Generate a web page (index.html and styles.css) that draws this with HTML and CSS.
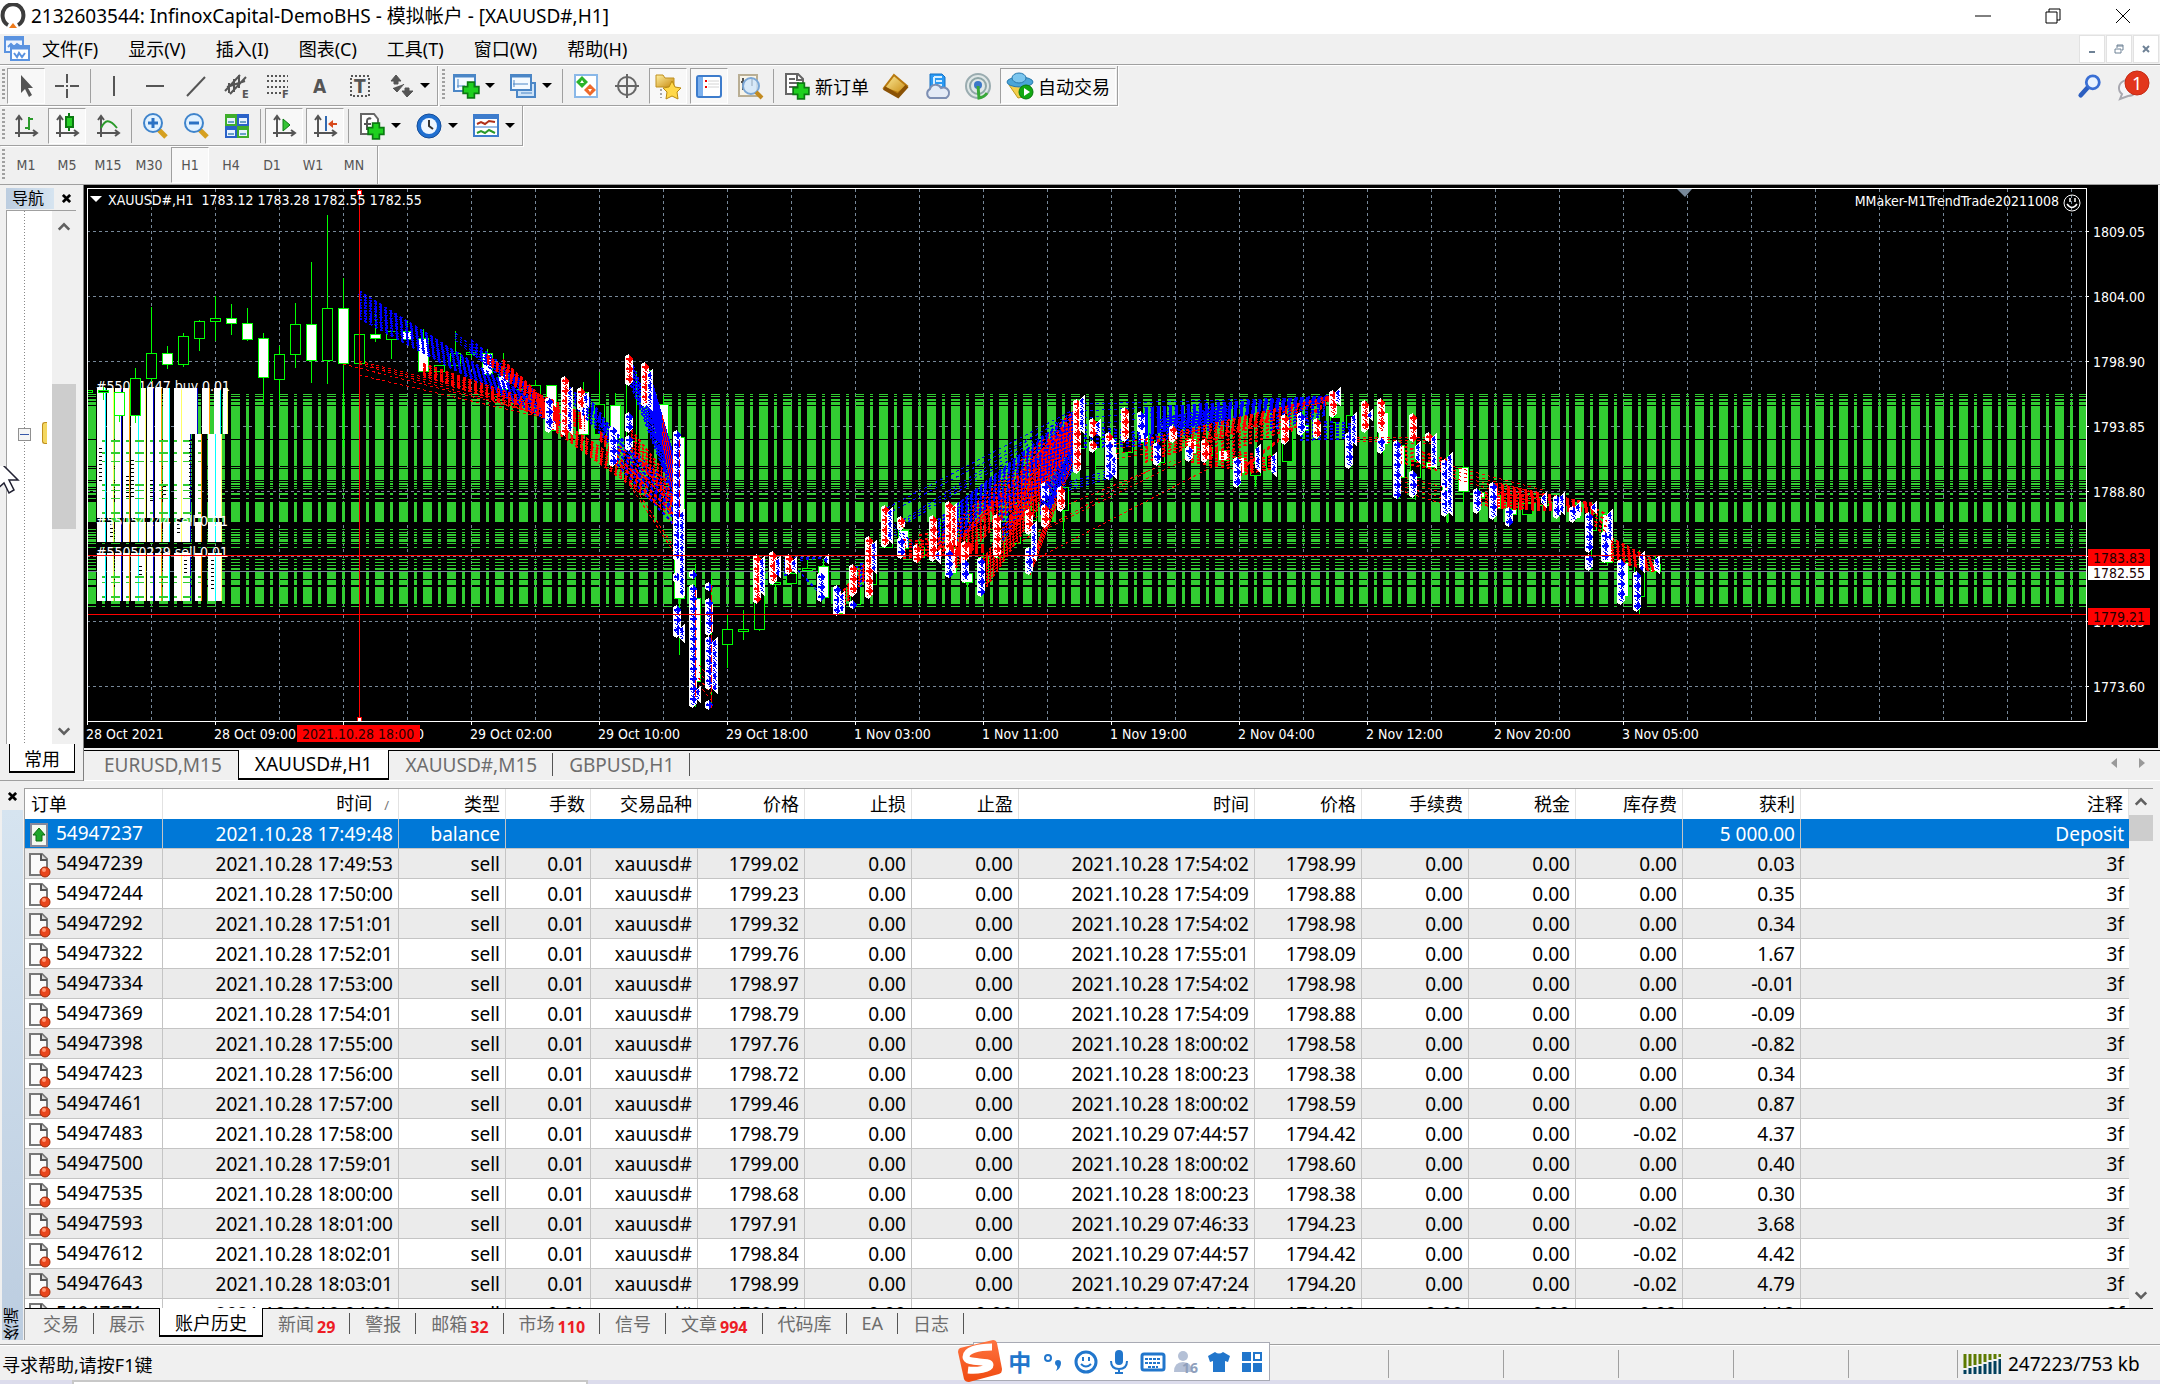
FILE: index.html
```html
<!DOCTYPE html>
<html lang="zh-CN">

<head>
  <meta charset="utf-8">
  <meta name="viewport" content="width=device-width, initial-scale=1">
  <title>2132603544: InfinoxCapital-DemoBHS - 模拟帐户 - [XAUUSD#,H1]</title>
  <link rel="stylesheet" href="styles.css">
</head>

<body>
  <svg class="defs" aria-hidden="true">
    <defs>
      <linearGradient id="gold" x1="0" y1="0" x2="1" y2="1">
        <stop offset="0" stop-color="#fff0a0" />
        <stop offset="1" stop-color="#c88a10" />
      </linearGradient>
      <linearGradient id="sogou" x1="0" y1="0" x2="0" y2="1">
        <stop offset="0" stop-color="#ff7440" />
        <stop offset="1" stop-color="#f04a10" />
      </linearGradient>
      <symbol id="plus" viewBox="0 0 16 16">
        <path d="M5 1h6v4h4v6h-4v4H5v-4H1V5h4z" fill="#1fd01f" stroke="#0b7a12" stroke-width="1.5" />
      </symbol>
      <symbol id="axes" viewBox="0 0 28 28">
        <path d="M7 25V5M3 21h21M4 8l3-4 3 4M21 18l4 3-4 3" fill="none" stroke="#555" stroke-width="2" />
      </symbol>
      <symbol id="doc" viewBox="0 0 24 26">
        <path d="M2 2h12l5 5v16H2z" fill="#fafafa" stroke="#777" stroke-width="2" />
        <path d="M13 2v6h6" fill="#ddd" stroke="#555" stroke-width="2" />
        <circle cx="17" cy="20" r="5" fill="#e8461c" stroke="#a02a08" />
        <circle cx="16" cy="18" r="2" fill="#ff9a78" />
      </symbol>
      <symbol id="up" viewBox="0 0 16 16">
        <path d="M2 11l6-6 6 6" fill="none" stroke="#606060" stroke-width="3" />
      </symbol>
      <symbol id="down" viewBox="0 0 16 16">
        <path d="M2 5l6 6 6-6" fill="none" stroke="#606060" stroke-width="3" />
      </symbol>
      <symbol id="cross" viewBox="0 0 10 10">
        <path d="M1 1l8 8M9 1l-8 8" stroke="currentColor" stroke-width="3" />
      </symbol>
    </defs>
  </svg>

  <header class="titlebar">
    <svg class="app-icon" viewBox="0 0 26 26">
      <path d="M8 22C2 19 1 10 5 5 9 0 17 0 21 5c4 5 3 14-3 17" fill="none" stroke="#3c3c3c" stroke-width="4" />
      <path d="M9 25l4-5 4 5z" fill="#ef7a1a" />
    </svg>
    <h1 class="title">2132603544: InfinoxCapital-DemoBHS - 模拟帐户 - [XAUUSD#,H1]</h1>
    <div class="window-buttons">
      <button aria-label="最小化"><svg viewBox="0 0 16 16"><path d="M0 8h16" /></svg></button>
      <button aria-label="还原"><svg viewBox="0 0 16 16"><path d="M1 4h11v11H1zM4 4V1h11v11h-3" /></svg></button>
      <button aria-label="关闭"><svg viewBox="0 0 16 16"><path d="M1 1l14 14M15 1L1 15" /></svg></button>
    </div>
  </header>

  <nav class="menubar">
    <svg class="menu-icon" viewBox="0 0 26 26">
      <rect x="1" y="1" width="18" height="15" fill="#eef5ff" stroke="#5b93e0" stroke-width="2" />
      <path d="M1 3h18" stroke="#5b93e0" stroke-width="3" />
      <path d="M4 11l3-3 3 3 3-3 3 2" fill="none" stroke="#5b93e0" stroke-width="2" />
      <rect x="7" y="10" width="18" height="14" fill="#fff" stroke="#5b93e0" stroke-width="2" />
      <path d="M7 12h18" stroke="#5b93e0" stroke-width="3" />
      <path d="M10 17l3 4 2-4 3 4 3-4" fill="none" stroke="#5b93e0" stroke-width="2" />
    </svg>
    <button>文件(F)</button>
    <button>显示(V)</button>
    <button>插入(I)</button>
    <button>图表(C)</button>
    <button>工具(T)</button>
    <button>窗口(W)</button>
    <button>帮助(H)</button>
    <div class="mdi-buttons">
      <button aria-label="最小化图表"><svg viewBox="0 0 10 10"><path d="M2 8h6" stroke-width="2" /></svg></button>
      <button aria-label="还原图表"><svg viewBox="0 0 10 10"><path d="M1 5h6v4H1zM3 4V1h6v5H8M3 2h6" /></svg></button>
      <button aria-label="关闭图表"><svg viewBox="0 0 10 10"><path d="M2 2l6 6M8 2L2 8" stroke-width="2" /></svg></button>
    </div>
  </nav>

  <div class="toolbars">
    <div class="toolrow">
      <div class="toolgroup">
        <button class="tool on" aria-label="光标"><svg viewBox="0 0 28 28"><path d="M9 3v18l4-4 4 8 3-2-4-7h5z" fill="#555" /></svg></button>
        <button class="tool" aria-label="十字准线"><svg viewBox="0 0 28 28"><path d="M14 2v9M14 17v9M2 14h9M17 14h9M13 14h2" stroke="#555" stroke-width="2" /></svg></button>
        <i class="sep"></i>
        <button class="tool" aria-label="垂直线"><svg viewBox="0 0 28 28"><path d="M14 4v20" stroke="#555" stroke-width="2" /></svg></button>
        <button class="tool" aria-label="水平线"><svg viewBox="0 0 28 28"><path d="M5 14h18" stroke="#555" stroke-width="2" /></svg></button>
        <button class="tool" aria-label="趋势线"><svg viewBox="0 0 28 28"><path d="M5 24L23 5" stroke="#555" stroke-width="2" /></svg></button>
        <button class="tool" aria-label="等距通道"><svg viewBox="0 0 28 28"><path d="M2 19L17 3M7 22L23 5M6 11v10M11 7v13M16 3v13M4 15l18-6" stroke="#555" stroke-width="2" fill="none" /><text class="icon-letter" x="19" y="26">E</text></svg></button>
        <button class="tool" aria-label="斐波纳契回调线"><svg viewBox="0 0 28 28"><path d="M3 4h21M3 9h21M3 15h21M3 21h14" stroke="#555" stroke-width="2" stroke-dasharray="2 2" /><text class="icon-letter" x="18" y="26">F</text></svg></button>
        <button class="tool" aria-label="文字"><svg viewBox="0 0 28 28"><text class="icon-big" x="8" y="21">A</text></svg></button>
        <button class="tool" aria-label="文字标签"><svg viewBox="0 0 28 28"><path d="M5 4h18v20H5z" fill="none" stroke="#555" stroke-width="2" stroke-dasharray="2 2" /><text class="icon-big" x="8" y="21">T</text></svg></button>
        <button class="tool" aria-label="箭头"><svg viewBox="0 0 28 28"><path d="M9 3l5 6h-3v3H7V9H4zM20 25l-5-6h3v-3h4v3h4zM6 16l4 4 7-8" fill="#555" stroke="#555" /></svg></button>
        <button class="drop" aria-label="更多箭头"></button>
      </div>
      <div class="toolgroup">
        <button class="tool" aria-label="新图表"><svg viewBox="0 0 28 28"><path d="M2 3h21v16H2z" fill="#f4faff" stroke="#4b86c6" stroke-width="2" /><path d="M2 4h21" stroke="#4b86c6" stroke-width="3" /><path d="M6 7v9M5 14h8" stroke="#4b86c6" /><use href="#plus" x="10" y="9" width="18" height="18" /></svg></button>
        <button class="drop" aria-label="新图表列表"></button>
        <button class="tool" aria-label="配置文件"><svg viewBox="0 0 28 28"><path d="M8 11h18v14H8z" fill="#cfe3f7" stroke="#4b86c6" stroke-width="2" /><path d="M2 3h20v15H2z" fill="#f4faff" stroke="#4b86c6" stroke-width="2" /><path d="M2 4h20" stroke="#4b86c6" stroke-width="3" /><path d="M5 8v7M4 12h15M12 21h11" stroke="#4b86c6" /></svg></button>
        <button class="drop" aria-label="配置文件列表"></button>
        <i class="sep"></i>
        <button class="tool" aria-label="市场报价"><svg viewBox="0 0 28 28"><path d="M3 3h22v22H3z" fill="#fff" stroke="#8ab8e8" stroke-width="2" /><path d="M10 4l6 6-6 6-6-6z" fill="#2bb32b" /><path d="M10 8l2 3H8z" fill="#fff" /><path d="M18 12l6 6-6 6-6-6z" fill="#ee6a2c" /><path d="M18 20l2-3h-4z" fill="#fff" /></svg></button>
        <button class="tool" aria-label="数据窗口"><svg viewBox="0 0 28 28"><circle cx="14" cy="14" r="9" fill="none" stroke="#666" stroke-width="2" /><path d="M14 2v24M2 14h24" stroke="#666" stroke-width="2" /></svg></button>
        <button class="tool on" aria-label="导航"><svg viewBox="0 0 28 28"><path d="M2 3h7l2 3h9v9H2z" fill="url(#gold)" stroke="#c09020" /><path d="M7 17v9" stroke="#555" stroke-dasharray="2 2" /><path d="M18 9l3 6 6 1-4 4 1 7-6-3-6 3 1-7-4-4 6-1z" fill="#ffd84a" stroke="#b98a10" /></svg></button>
        <button class="tool on" aria-label="终端"><svg viewBox="0 0 28 28"><rect x="2" y="4" width="24" height="21" rx="2" fill="#fff" stroke="#3d7ccc" stroke-width="2" /><path d="M3 5h5v19H3z" fill="#7db1ee" /><path d="M10 9h2M10 15h2" stroke="#e00" stroke-width="2" /><path d="M13 9h11M13 12h11M13 15h11" stroke="#d4d4d4" /></svg></button>
        <button class="tool" aria-label="策略测试"><svg viewBox="0 0 28 28"><path d="M3 3h18v21H3z" fill="#f8f4e8" stroke="#b9ae94" stroke-width="2" /><path d="M7 6v12M5 10h4M16 6v8" stroke="#555" stroke-width="2" /><circle cx="15" cy="14" r="8" fill="#cfe6fb" fill-opacity=".8" stroke="#7ba7d6" stroke-width="2" /><path d="M20 20l6 6" stroke="#c28a20" stroke-width="4" /></svg></button>
        <i class="sep"></i>
        <button class="tool wide" aria-label="新订单"><svg viewBox="0 0 28 28"><path d="M3 2h12l5 5v15H3z" fill="#fff" stroke="#666" stroke-width="2" /><path d="M14 2v6h6M6 7h6M6 11h10M6 15h8" fill="none" stroke="#666" stroke-width="2" /><use href="#plus" x="9" y="10" width="18" height="18" /></svg>新订单</button>
        <button class="tool" aria-label="MetaEditor"><svg viewBox="0 0 28 28"><path d="M12 3l13 11-9 7L2 16z" fill="url(#gold)" stroke="#b87a10" stroke-width="2" /><path d="M2 16l14 8 9-10" fill="none" stroke="#8a5205" stroke-width="4" /></svg></button>
        <button class="tool" aria-label="虚拟主机"><svg viewBox="0 0 28 28"><path d="M7 2h12l3 3v12H7z" fill="#2b9af3" stroke="#1570c4" /><path d="M11 5v10M11 5h8M13 9h6M13 13h6" stroke="#d8efff" stroke-width="2" /><path d="M7 26a5 5 0 0 1 0-9 6 6 0 0 1 11-1 5 5 0 0 1 5 10z" fill="#e4ebf6" stroke="#7d8fb3" stroke-width="2" /></svg></button>
        <button class="tool" aria-label="信号"><svg viewBox="0 0 28 28"><circle cx="14" cy="14" r="12" fill="#dfe7e7" stroke="#9aacb0" stroke-width="2" /><circle cx="14" cy="14" r="8" fill="none" stroke="#8fa6a8" stroke-width="2" /><circle cx="14" cy="13" r="4" fill="#3c78c8" /><path d="M14 14l1 12a12 12 0 0 0 8-5" fill="none" stroke="#38a838" stroke-width="3" /></svg></button>
        <button class="tool wide on" aria-label="自动交易"><svg viewBox="0 0 28 28"><path d="M3 13h21l-7 12-5 1z" fill="#f4cf4c" stroke="#c09a20" /><ellipse cx="14" cy="10" rx="13" ry="5" fill="#4aa5d8" stroke="#2a7aae" /><ellipse cx="13" cy="6" rx="7" ry="5" fill="#7cc6ee" stroke="#2a7aae" /><circle cx="20" cy="20" r="7" fill="#12a812" stroke="#077a0c" /><path d="M18 16l6 4-6 4z" fill="#fff" /></svg>自动交易</button>
      </div>
      <div class="tool-right">
        <button aria-label="搜索"><svg viewBox="0 0 28 28"><path d="M4 24l9-10" stroke="#2d5fc0" stroke-width="5" stroke-linecap="round" /><circle cx="17" cy="10" r="7" fill="#eaf3ff" stroke="#3a6fd4" stroke-width="3" /></svg></button>
        <button aria-label="消息" class="chat"><svg viewBox="0 0 36 36"><path d="M5 31l2-5a9 8 0 1 1 6 2z" fill="#f4f4f8" stroke="#a8a8b0" stroke-width="2" /><circle cx="22" cy="15" r="12" fill="#e2361c" stroke="#c42a14" /></svg><span class="chat-count">1</span></button>
      </div>
    </div>

    <div class="toolrow">
      <div class="toolgroup">
        <button class="tool" aria-label="柱状图"><svg viewBox="0 0 28 28"><use href="#axes" width="28" height="28" /><path d="M17 5v13M17 7h4M13 16h4" stroke="#2a9a2a" stroke-width="2" /></svg></button>
        <button class="tool on" aria-label="蜡烛图"><svg viewBox="0 0 28 28"><use href="#axes" width="28" height="28" /><path d="M16 1v18" stroke="#0b7a12" stroke-width="2" /><path d="M13 5h7v10h-7z" fill="#27d027" stroke="#0b7a12" stroke-width="2" /></svg></button>
        <button class="tool" aria-label="折线图"><svg viewBox="0 0 28 28"><use href="#axes" width="28" height="28" /><path d="M7 16c4-8 8-10 16 0" fill="none" stroke="#2a9a2a" stroke-width="2" /></svg></button>
        <i class="sep"></i>
        <button class="tool" aria-label="放大"><svg viewBox="0 0 28 28"><path d="M17 17l8 8" stroke="#d6a020" stroke-width="5" /><circle cx="12" cy="11" r="9" fill="#e2f2ff" stroke="#3f84cc" stroke-width="2" /><path d="M12 6v10M7 11h10" stroke="#2b72c4" stroke-width="3" /></svg></button>
        <button class="tool" aria-label="缩小"><svg viewBox="0 0 28 28"><path d="M17 17l8 8" stroke="#d6a020" stroke-width="5" /><circle cx="12" cy="11" r="9" fill="#e2f2ff" stroke="#3f84cc" stroke-width="2" /><path d="M7 11h10" stroke="#2b72c4" stroke-width="3" /></svg></button>
        <button class="tool" aria-label="平铺窗口"><svg viewBox="0 0 28 28"><path d="M2 2h12v12H2zM14 14h12v12H14z" fill="#3fae2c" /><path d="M14 2h12v12H14zM2 14h12v12H2z" fill="#2a62c8" /><path d="M4 6h8v6H4zM16 6h8v6h-8zM4 18h8v6H4zM16 18h8v6h-8z" fill="#e8f3ff" /><path d="M5 10h6M17 10h6M5 22h6M17 22h6" stroke="#6aa0c8" stroke-width="2" /></svg></button>
        <i class="sep"></i>
        <button class="tool on" aria-label="自动滚动"><svg viewBox="0 0 28 28"><use href="#axes" width="28" height="28" /><path d="M13 7l7 6-7 6z" fill="#35c435" stroke="#0b7a12" /></svg></button>
        <button class="tool on" aria-label="图表平移"><svg viewBox="0 0 28 28"><use href="#axes" width="28" height="28" /><path d="M15 4v15" stroke="#3068b0" stroke-width="2" /><path d="M17 12l5-4v3h4v2h-4v3z" fill="#d84a1c" /></svg></button>
        <i class="sep"></i>
        <button class="tool" aria-label="技术指标"><svg viewBox="0 0 28 28"><path d="M3 2h13l4 5v15H3z" fill="#fff" stroke="#666" stroke-width="2" /><path d="M9 18V9c0-3 3-3 4-2M6 12h7" fill="none" stroke="#555" stroke-width="2" /><use href="#plus" x="9" y="10" width="18" height="18" /></svg></button>
        <button class="drop" aria-label="技术指标列表"></button>
        <button class="tool" aria-label="时间周期"><svg viewBox="0 0 28 28"><circle cx="14" cy="14" r="12" fill="#1f6fd0" stroke="#144c98" /><circle cx="14" cy="14" r="8" fill="#eef6ff" /><path d="M14 8v6l4 3" fill="none" stroke="#333" stroke-width="2" /></svg></button>
        <button class="drop" aria-label="时间周期列表"></button>
        <button class="tool" aria-label="模板"><svg viewBox="0 0 28 28"><path d="M2 3h24v21H2z" fill="#fff" stroke="#3d7ccc" stroke-width="2" /><path d="M2 5h24" stroke="#3d7ccc" stroke-width="4" /><path d="M2 15h24" stroke="#3d7ccc" /><path d="M5 12l4-2 4 2 4-3 6 1" fill="none" stroke="#b03018" stroke-width="2" /><path d="M5 21l4-2 4 2 4-3 6 3" fill="none" stroke="#2a9a2a" stroke-width="2" /></svg></button>
        <button class="drop" aria-label="模板列表"></button>
      </div>
    </div>

    <div class="toolrow toolrow--periods">
      <div class="toolgroup">
        <button class="tool">M1</button>
        <button class="tool">M5</button>
        <button class="tool">M15</button>
        <button class="tool">M30</button>
        <button class="tool on">H1</button>
        <button class="tool">H4</button>
        <button class="tool">D1</button>
        <button class="tool">W1</button>
        <button class="tool">MN</button>
      </div>
    </div>
  </div>

  <main class="workspace">
    <aside class="navigator">
      <div class="nav-head">
        <h2>导航</h2>
        <button aria-label="关闭导航"><svg viewBox="0 0 10 10"><use href="#cross" /></svg></button>
      </div>
      <div class="nav-body">
        <div class="tree">
          <span class="tree-box"></span>
          <span class="tree-folder"></span>
        </div>
        <div class="scroll">
          <button aria-label="向上"><svg><use href="#up" /></svg></button>
          <i class="thumb"></i>
          <button aria-label="向下"><svg><use href="#down" /></svg></button>
        </div>
      </div>
      <button class="nav-tab">常用</button>
      <svg class="pointer" viewBox="0 0 20 30"><path d="M-6-10L18 14H9l5 10-5 3-5-10-10 9z" fill="#fff" stroke="#223" stroke-width="1.5" /></svg>
    </aside>

    <section class="charts">
      <svg id="chart" class="chart" viewBox="84 185 2074 563" role="img" aria-label="XAUUSD#,H1"></svg>
      <div class="chart-tabs">
        <button>EURUSD,M15</button>
        <button class="active">XAUUSD#,H1</button>
        <button>XAUUSD#,M15</button>
        <button>GBPUSD,H1</button>
        <div class="tab-scroll">
          <button aria-label="上一个"><svg viewBox="0 0 8 12"><path d="M7 1v10L1 6z" /></svg></button>
          <button aria-label="下一个"><svg viewBox="0 0 8 12"><path d="M1 1v10l6-5z" /></svg></button>
        </div>
      </div>
    </section>
  </main>

  <section class="terminal">
    <div class="term-side">
      <button aria-label="关闭终端"><svg viewBox="0 0 10 10"><use href="#cross" /></svg></button>
      <h2>终端</h2>
    </div>
    <div class="term-main">
      <div class="term-body">
        <div class="history">
          <table>
            <colgroup>
              <col class="c-order"><col class="c-time"><col class="c-num"><col class="c-lot"><col class="c-num">
              <col class="c-num"><col class="c-num"><col class="c-num"><col class="c-time"><col class="c-num">
              <col class="c-num"><col class="c-num"><col class="c-num"><col class="c-profit"><col>
            </colgroup>
            <thead>
              <tr>
                <th>订单</th><th>时间<span class="sort">/</span></th><th>类型</th><th>手数</th><th>交易品种</th>
                <th>价格</th><th>止损</th><th>止盈</th><th>时间</th><th>价格</th>
                <th>手续费</th><th>税金</th><th>库存费</th><th>获利</th><th>注释</th>
              </tr>
            </thead>
            <tbody id="orders">
              <tr class="selected">
                <td><svg class="row-icon" viewBox="0 0 24 26"><path d="M3 2h16v22H3z" fill="#f4f8f0" stroke="#889" stroke-width="2" /><path d="M11 6l6 7h-3v6H8v-6H5z" fill="#1fa52a" stroke="#0b6a12" /></svg>54947237</td>
                <td>2021.10.28 17:49:48</td><td>balance</td><td colspan="10"></td><td>5 000.00</td><td>Deposit</td>
              </tr>
            </tbody>
          </table>
        </div>
        <div class="scroll">
          <button aria-label="向上"><svg><use href="#up" /></svg></button>
          <i class="thumb"></i>
          <button aria-label="向下"><svg><use href="#down" /></svg></button>
        </div>
      </div>
      <div class="term-tabs">
        <button>交易</button>
        <button>展示</button>
        <button class="active">账户历史</button>
        <button>新闻<b>29</b></button>
        <button>警报</button>
        <button>邮箱<b>32</b></button>
        <button>市场<b>110</b></button>
        <button>信号</button>
        <button>文章<b>994</b></button>
        <button>代码库</button>
        <button>EA</button>
        <button>日志</button>
      </div>
    </div>
  </section>

  <footer class="statusbar">
    <span class="status-help">寻求帮助,请按F1键</span>
    <i></i><i></i><i></i><i></i><i class="narrow"></i>
    <span class="traffic">
      <svg viewBox="0 0 38 20">
        <path d="M2 0v14M7 0v12M12 0v11M17 0v10M22 0v8M27 0v6M32 0v5M37 0v3" stroke="#5d7a00" stroke-width="3" />
        <path d="M2 20v-4M7 20v-6M12 20v-7M17 20v-8M22 20v-10M27 20v-12M32 20v-13M37 20V5" stroke="#003f5c" stroke-width="3" />
      </svg>
      247223/753 kb
    </span>
  </footer>
  <div class="desktop-edge"><i></i></div>

  <div class="ime">
    <svg class="ime-logo" viewBox="0 0 44 44">
      <path d="M2 9L35 1q3 0 4 3l5 26q0 4-3 5L11 43q-4 0-5-3L0 13q0-3 2-4z" fill="url(#sogou)" />
      <path d="M34 8C20 8 8 11 8 18c0 7 24 3 24 8 0 4-13 6-22 5" fill="none" stroke="#fff" stroke-width="7" />
    </svg>
    <button class="ime-text">中</button>
    <button aria-label="标点"><svg viewBox="0 0 24 24"><circle cx="7" cy="8" r="3" fill="none" stroke="#2176cc" stroke-width="2" /><path d="M14 13a3 3 0 1 1 6 0q0 5-5 8 2-3 1-5-2-1-2-3z" fill="#2176cc" /></svg></button>
    <button aria-label="表情"><svg viewBox="0 0 24 24"><circle cx="12" cy="12" r="10" fill="none" stroke="#2176cc" stroke-width="3" /><path d="M9 7v4M15 7v4M7 14q5 5 10 0" fill="none" stroke="#2176cc" stroke-width="2" /></svg></button>
    <button aria-label="语音"><svg viewBox="0 0 24 24"><rect x="8" y="0" width="8" height="15" rx="4" fill="#2176cc" /><path d="M4 11q0 8 8 8t8-8M12 19v4M8 23h8" fill="none" stroke="#2176cc" stroke-width="2" /></svg></button>
    <button aria-label="键盘"><svg viewBox="0 0 24 24"><rect x="1" y="4" width="22" height="16" rx="2" fill="none" stroke="#2176cc" stroke-width="3" /><path d="M4 9h16M4 13h16M7 17h10" stroke="#2176cc" stroke-width="2" stroke-dasharray="3 1" /></svg></button>
    <button aria-label="账号"><svg viewBox="0 0 24 24"><circle cx="9" cy="6" r="5" fill="#b4c0d6" /><path d="M0 22q0-10 9-10t9 10z" fill="#b4c0d6" /><text class="ime-level" x="8" y="23">16</text></svg></button>
    <button aria-label="皮肤"><svg viewBox="0 0 24 24"><path d="M8 2q4 3 8 0l7 4-2 6-3-1v11H6V11l-3 1L1 6z" fill="#2176cc" /></svg></button>
    <button aria-label="工具箱"><svg viewBox="0 0 24 24"><path d="M2 2h9v9H2zM2 13h9v9H2zM13 13h9v9h-9z" fill="#2176cc" /><rect x="14" y="3" width="7" height="7" fill="none" stroke="#2176cc" stroke-width="2" /></svg></button>
  </div>

  <script src="script.js"></script>
</body>

</html>
```
FILE: styles.css
```css
:root {
  --face: #f0f0f0;
  --line: #a0a0a0;
  --grid: #c4c4c4;
  --select: #0078d7;
  --ui-font: "Noto Sans", "Noto Sans CJK SC", sans-serif;
  --small-font: "DejaVu Sans Condensed", "Noto Sans", sans-serif;
}

* {
  box-sizing: border-box;
}

html,
body {
  margin: 0;
  height: 100vh;
}

body {
  display: flex;
  flex-direction: column;
  overflow: hidden;
  background: var(--face);
  color: #000;
  font-family: var(--ui-font);
  font-size: 18px;
}

button {
  display: flex;
  align-items: center;
  justify-content: center;
  padding: 0;
  border: 0;
  background: none;
  color: inherit;
  font: inherit;
  white-space: nowrap;
}

button svg {
  overflow: visible;
}

h1,
h2 {
  margin: 0;
  font-size: inherit;
  font-weight: normal;
}

.defs {
  position: absolute;
  width: 0;
  height: 0;
}

/* title and menu */

.titlebar {
  display: flex;
  align-items: center;
  height: 34px;
  padding-bottom: 2px;
  background: #fff;
}

.app-icon {
  width: 26px;
  height: 26px;
  margin-right: 5px;
}

.title {
  flex: 1;
  font-size: 19px;
  line-height: 28px;
}

.window-buttons {
  display: flex;
  margin-right: 2px;
}

.window-buttons button {
  width: 70px;
  height: 32px;
}

.window-buttons svg {
  width: 16px;
  height: 16px;
  fill: none;
  stroke: #000;
}

.menubar {
  display: flex;
  align-items: center;
  gap: 30px;
  height: 31px;
  padding-bottom: 1px;
  border-bottom: 1px solid var(--line);
  line-height: 26px;
}

.menu-icon {
  width: 26px;
  height: 26px;
  margin: 0 -18px 0 4px;
}

.mdi-buttons {
  display: flex;
  gap: 1px;
  margin: 0 1px 0 auto;
}

.mdi-buttons button {
  width: 26px;
  height: 28px;
  border: 1px solid #e2e2e2;
  background: #fff;
}

.mdi-buttons svg {
  width: 10px;
  height: 10px;
  fill: none;
  stroke: #6f8296;
}

/* toolbars */

.toolbars {
  border-top: 1px solid #fff;
}

.toolrow {
  display: flex;
  height: 40px;
}

.toolrow--periods {
  height: 38px;
  color: #555;
  font: 14px var(--small-font);
}

.toolgroup {
  display: flex;
  align-items: center;
  gap: 3px;
  padding: 0 1px 0 7px;
  border-right: 1px solid var(--line);
  border-bottom: 1px solid var(--line);
  box-shadow: 1px 1px #fff;
  background: repeating-linear-gradient(var(--line) 0 2px, transparent 2px 4px) 2px 3px / 3px 32px no-repeat;
}

.toolgroup + .toolgroup {
  margin-left: 2px;
}

.toolrow--periods .toolgroup {
  padding-right: 4px;
  border-bottom: 0;
}

.tool {
  flex: none;
  width: 38px;
  height: 36px;
}

.tool svg {
  width: 28px;
  height: 28px;
}

.tool.wide {
  width: auto;
  gap: 4px;
  padding: 0 5px;
}

.tool.on {
  border: 1px solid;
  border-color: var(--line) #fff #fff var(--line);
  background: #f8f8f8;
}

.sep {
  width: 1px;
  height: 34px;
  margin: 0 1px;
  background: var(--line);
}

.drop {
  width: 10px;
  height: 36px;
  margin: 0 6px 0 -3px;
}

.drop::before {
  content: "";
  border: 5px solid transparent;
  border-top-color: #000;
  border-bottom: 0;
}

.icon-letter {
  font: bold 11px var(--small-font);
  fill: #555;
}

.icon-big {
  font: bold 19px var(--small-font);
  fill: #555;
}

.tool-right {
  display: flex;
  align-items: center;
  gap: 12px;
  margin: 0 9px 0 auto;
}

.tool-right svg {
  width: 26px;
  height: 26px;
}

.chat {
  position: relative;
}

.tool-right .chat svg {
  width: 36px;
  height: 36px;
}

.chat-count {
  position: absolute;
  top: 3px;
  left: 17px;
  color: #fff;
  line-height: 24px;
}

/* navigator */

.workspace {
  display: grid;
  grid-template-columns: 83px minmax(0, 1fr);
  border-top: 1px solid var(--line);
}

.navigator {
  position: relative;
  display: flex;
  flex-direction: column;
  padding: 1px 7px 7px 6px;
  border-bottom: 1px solid var(--line);
}

.nav-head {
  display: flex;
  align-items: center;
  justify-content: space-between;
  height: 24px;
  padding-right: 5px;
}

.nav-head h2 {
  width: 48px;
  padding-left: 6px;
  background: linear-gradient(90deg, #bccde0, #d6e4f0);
  font-size: 16px;
  line-height: 21px;
}

.nav-head svg,
.term-side svg {
  width: 9px;
  height: 9px;
}

.nav-body {
  display: flex;
  flex: 1;
  border: solid var(--line);
  border-width: 1px 0 0 1px;
  background: #fff;
}

.tree {
  display: flex;
  flex: 1;
  align-items: flex-start;
  padding: 217px 0 0 11px;
  background: repeating-linear-gradient(#888 0 1px, transparent 1px 3px) 17px 0 / 1px 100% no-repeat;
}

.tree-box {
  flex: none;
  width: 13px;
  height: 13px;
  border: 1px solid #909090;
  background: linear-gradient(#3858a8, #3858a8) center / 9px 1px no-repeat #f4f4f4;
}

.tree-folder {
  width: 5px;
  height: 22px;
  margin: -6px 0 0 11px;
  border: 1px solid #c09020;
  border-right: 0;
  border-radius: 3px 0 0 3px;
  background: #f4d760;
}

.scroll {
  display: flex;
  flex-direction: column;
  flex: none;
  width: 24px;
  background: var(--face);
}

.scroll button {
  height: 26px;
}

.scroll button:last-child {
  margin-top: auto;
}

.scroll svg {
  width: 14px;
  height: 14px;
}

.thumb {
  height: 26px;
  background: #cdcdcd;
}

.navigator .scroll button:first-child {
  height: 32px;
}

.navigator .thumb {
  height: 145px;
  margin-top: 141px;
}

.nav-tab {
  width: 66px;
  height: 29px;
  margin-left: 3px;
  border: solid #000;
  border-width: 0 1px 2px;
  background: #fff;
}

.pointer {
  position: absolute;
  top: 281px;
  left: 0;
  width: 20px;
  height: 30px;
}

/* chart */

.charts {
  min-width: 0;
  border-left: 1px solid #808080;
}

.chart {
  display: block;
  width: calc(100% - 2px);
  background: #000;
  font: 14px var(--small-font);
}

.chart text {
  fill: #fff;
}

.chart .on-color {
  fill: #200;
}

.lines {
  fill: none;
  shape-rendering: crispEdges;
}

.chart-tabs {
  display: flex;
  height: 33px;
  padding-top: 2px;
  border-bottom: 1px solid #fff;
  background: linear-gradient(#000, #000) 0 2px / 100% 1px no-repeat;
  color: #6d6d6d;
  font-size: 19px;
}

.chart-tabs > button {
  height: 27px;
  margin-top: 1px;
  padding: 0 16px;
  background: linear-gradient(#555, #555) right center / 1px 23px no-repeat;
}

.chart-tabs > button:first-child {
  padding-left: 20px;
  background: none;
}

.chart-tabs > .active {
  height: 30px;
  margin-top: 0;
  border: solid #000;
  border-width: 0 1px 2px;
  background: #fff;
  color: #000;
}

.tab-scroll {
  display: flex;
  gap: 20px;
  margin: 0 14px 4px auto;
}

.tab-scroll svg {
  width: 8px;
  height: 12px;
  fill: #999;
}

/* terminal */

.terminal {
  display: flex;
  flex: 1;
  min-height: 0;
  padding: 7px 7px 4px 2px;
}

.term-side {
  display: flex;
  flex-direction: column;
  width: 22px;
  padding-right: 1px;
}

.term-side button {
  height: 22px;
  margin-right: 1px;
  padding-bottom: 6px;
}

.term-side h2 {
  flex: 1;
  padding-bottom: 4px;
  background: linear-gradient(#bccde0, #d6e4f0);
  font-size: 16px;
  line-height: 20px;
  writing-mode: vertical-rl;
  transform: rotate(180deg);
}

.term-main {
  display: flex;
  flex: 1;
  flex-direction: column;
  min-width: 0;
  border: solid var(--line);
  border-width: 1px 0 0 1px;
}

.term-body {
  display: flex;
  flex: 1;
  min-height: 0;
  background: #fff;
}

.history {
  flex: 1;
  min-width: 0;
  overflow: hidden;
}

table {
  width: 100%;
  table-layout: fixed;
  border-collapse: separate;
  border-spacing: 0;
}

.c-order {
  width: 138px;
}

.c-time {
  width: 236px;
}

.c-num {
  width: 107px;
}

.c-lot {
  width: 85px;
}

.c-profit {
  width: 118px;
}

th,
td {
  height: 30px;
  padding: 0 5px;
  border-right: 1px solid var(--grid);
  font-size: 19px;
  font-weight: normal;
  line-height: 28px;
  text-align: right;
  white-space: nowrap;
}

th {
  border-color: #e2e2e2;
  font-size: 18px;
}

td {
  border-bottom: 1px solid var(--grid);
}

th:first-child {
  padding-left: 6px;
  text-align: left;
}

td:first-child {
  padding-left: 3px;
  text-align: left;
}

td:last-child {
  border-right: 0;
}

tbody tr:nth-child(even) {
  background: #ebebeb;
}

.selected {
  background: var(--select);
  color: #fff;
}

.sort {
  padding: 0 4px 0 12px;
  color: #777;
  font-size: 13px;
}

.row-icon {
  width: 24px;
  height: 26px;
  margin-right: 4px;
  vertical-align: middle;
}

.term-tabs {
  display: flex;
  height: 32px;
  border-top: 1px solid #000;
  color: #6d6d6d;
}

.term-tabs button {
  height: 28px;
  padding: 0 15px;
  background: linear-gradient(#555, #555) right center / 1px 21px no-repeat;
}

.term-tabs button:first-child {
  padding-left: 18px;
}

.term-tabs .active {
  height: 29px;
  margin: -1px 0 0 -1px;
  border: solid #000;
  border-width: 0 1px 2px;
  background: #fff;
  color: #000;
}

.term-tabs b {
  padding: 8px 0 0 3px;
  color: #ed1c24;
  font: bold 16px/20px "Open Sans", sans-serif;
}

/* status bar */

.statusbar {
  display: flex;
  align-items: center;
  height: 36px;
  padding: 2px 0 0 2px;
  border-top: 1px solid var(--line);
  box-shadow: inset 0 1px #fff;
}

.status-help {
  flex: 1;
}

.statusbar i {
  width: 115px;
  height: 28px;
  border-left: 1px solid var(--line);
}

.statusbar .narrow {
  width: 109px;
}

.traffic {
  display: flex;
  align-items: center;
  gap: 7px;
  width: 203px;
  height: 28px;
  padding-left: 5px;
  border-left: 1px solid var(--line);
  font-size: 19px;
}

.traffic svg {
  width: 38px;
  height: 20px;
}

.desktop-edge {
  height: 4px;
  padding-left: 72px;
  background: #dcdcec;
}

.desktop-edge i {
  display: block;
  width: 516px;
  height: 4px;
  border: 2px solid #c8c8c8;
  border-bottom: 0;
  background: #fff;
}

/* input method bar floating over the status bar */

.ime {
  position: absolute;
  bottom: 3px;
  left: 973px;
  display: flex;
  align-items: center;
  justify-content: space-around;
  width: 297px;
  height: 39px;
  padding-left: 29px;
  border: 1px solid #a8aab4;
  background: #fff;
}

.ime-logo {
  position: absolute;
  top: -4px;
  left: -16px;
  width: 44px;
  height: 44px;
}

.ime button {
  flex: 1;
}

.ime button svg {
  width: 24px;
  height: 24px;
}

.ime-text {
  color: #2176cc;
  font-size: 23px;
  font-weight: bold;
  line-height: 24px;
}

.ime-level {
  fill: #8f9fbc;
  font: bold 14px "Open Sans", sans-serif;
}
```
FILE: script.js
```js
const svg = document.getElementById('chart');
const LEFT = 87, RIGHT = 2086, TOP = 189, BOTTOM = 721;
let out = '';

function path(d, stroke, extra = '') {
  out += `<path class="lines" d="${d}" stroke="${stroke}" ${extra}/>`;
}

function rect(x, y, w, h, fill) {
  out += `<rect x="${x}" y="${y}" width="${w}" height="${h}" fill="${fill}" shape-rendering="crispEdges"/>`;
}

function text(x, y, s, cls = '') {
  out += `<text x="${x}" y="${y}" class="${cls}">${s}</text>`;
}

out += `<defs>
  <pattern id="mix-blue" width="4" height="4" patternUnits="userSpaceOnUse"><path d="M0 0h2v1H0zM2 1h1v1H2zM1 2h2v1H1zM3 3h1v1H3z" fill="#00f"/></pattern>
  <pattern id="mix-red" width="4" height="4" patternUnits="userSpaceOnUse"><path d="M0 0h2v1H0zM2 1h1v1H2zM1 2h2v1H1zM3 3h1v1H3z" fill="#f00"/></pattern>
  <clipPath id="plot"><rect x="${LEFT}" y="${TOP}" width="${RIGHT - LEFT}" height="${BOTTOM - TOP}"/></clipPath>
</defs>`;

// grid
let d = '';
for (let x = 151; x < RIGHT; x += 64) d += `M${x}.5 ${TOP}V${BOTTOM}`;
for (let y = 231; y < BOTTOM; y += 65) d += `M${LEFT} ${y}.5H${RIGHT}`;
path(d, '#778899', 'stroke-dasharray="3 3"');

// order levels: [top, height]
out += '<g clip-path="url(#plot)">';
const levels = [
  [394, 1], [396, 1], [399, 2], [402, 3], [406, 33], [440, 26], [467, 1], [469, 11], [481, 1], [483, 2], [486, 1],
  [488, 1], [493, 2], [498, 1], [502, 20], [529, 1], [532, 1], [534, 2], [537, 1], [539, 3], [543, 1], [547, 1],
  [559, 1], [562, 1], [565, 1], [568, 2], [571, 8], [580, 5], [587, 17], [606, 1]
];
levels.forEach(([y, h]) => path(`M${LEFT} ${y + h / 2}H${RIGHT}`, '#32cd32', `stroke-width="${h}" stroke-dasharray="9 6 3 6"`));
path(`M${LEFT} 571.5H${RIGHT}`, '#778899');

// order labels piled over each other on the left edge
const stems = [[97, 8], [107, 6], [115, 6], [123, 6], [131, 7], [139, 6], [147, 6], [155, 6], [163, 6], [174, 7], [182, 8], [195, 6], [208, 7], [216, 5]];
const upper = stems.slice(0, 10).concat([[182, 15], [202, 7], [214, 6], [223, 4]]);
[[upper, 388, 46], [stems, 434, 84], [stems, 522, 20], [stems, 553, 48]].forEach(([list, y, h]) => {
  list.forEach(([x, w], i) => {
    rect(x, y, w, h, '#fff');
    rect(x + w, y, 1, h, ['#0ff', '#ff6', '#00c', '#f90'][i % 4]);
  });
});
[440, 452, 461, 484, 490, 498, 512, 576, 582, 596].forEach(y =>
  path(`M${LEFT} ${y}.5H206`, '#32cd32', `stroke-width="${y % 4 ? 1 : 2}" stroke-dasharray="9 6 3 6"`));
path('M100 448V482M132 460v40M164 486v12M178 520v16M140 566v10M190 440v60M212 560v30M127 476v24M151 480v22M111 524v16M185 556v20',
  '#000', 'stroke-width="3" stroke-dasharray="1 3"');
text(96, 391, '#55041447 buy 0.01');
text(96, 526, '#55054244 sell 0.01');
text(96, 557, '#55050229 sell 0.01');

// candles: index, body top, body bottom, high, low, filled
const candles = [
  [0, 390, 392, 373, 400, 0], [1, 390, 392, 387, 400, 0], [2, 392, 415, 392, 422, 1], [3, 378, 415, 368, 423, 0],
  [4, 353, 378, 307, 382, 0], [5, 353, 364, 346, 369, 1], [6, 336, 364, 333, 367, 0], [7, 321, 338, 320, 351, 0],
  [8, 318, 321, 296, 341, 0], [9, 318, 323, 304, 335, 1], [10, 323, 339, 308, 341, 1], [11, 338, 377, 333, 404, 1],
  [12, 354, 379, 346, 400, 0], [13, 324, 354, 303, 368, 0], [14, 324, 360, 262, 383, 1], [15, 308, 360, 215, 384, 0],
  [16, 308, 363, 278, 447, 1], [17, 334, 363, 334, 363, 0], [18, 334, 338, 305, 342, 1], [19, 331, 339, 331, 359, 0],
  [20, 331, 339, 320, 339, 1], [21, 338, 371, 329, 371, 1], [22, 365, 371, 365, 371, 0], [23, 353, 365, 331, 365, 0],
  [24, 352, 354, 345, 358, 0], [25, 353, 374, 349, 374, 1], [26, 374, 389, 353, 393, 1], [27, 389, 400, 389, 400, 0],
  [28, 385, 407, 380, 407, 0], [29, 385, 430, 385, 430, 1], [30, 392, 430, 385, 432, 0], [31, 392, 434, 382, 434, 1],
  [32, 404, 434, 372, 434, 0], [33, 405, 438, 393, 440, 1], [34, 371, 441, 365, 441, 0], [35, 370, 405, 365, 405, 1],
  [36, 404, 437, 396, 437, 1], [37, 437, 598, 437, 655, 1], [38, 598, 681, 564, 707, 1], [39, 644, 681, 577, 708, 0],
  [40, 629, 644, 614, 668, 0], [41, 629, 631, 610, 640, 0], [42, 570, 629, 556, 631, 0], [43, 582, 584, 575, 590, 0],
  [44, 573, 583, 566, 583, 0], [45, 568, 570, 559, 571, 0], [46, 566, 597, 560, 600, 1], [47, 597, 613, 590, 614, 1],
  [48, 575, 604, 570, 606, 0], [49, 546, 584, 540, 590, 0], [50, 512, 547, 508, 547, 0], [51, 530, 548, 522, 552, 1],
  [52, 547, 557, 540, 560, 0], [53, 519, 548, 515, 555, 0], [54, 548, 573, 530, 576, 1], [55, 573, 582, 570, 588, 1],
  [56, 557, 582, 545, 590, 0], [57, 543, 557, 530, 560, 0], [58, 520, 543, 510, 545, 0], [59, 510, 520, 500, 530, 0],
  [60, 507, 521, 490, 525, 0], [61, 487, 510, 470, 532, 0], [62, 407, 448, 400, 460, 0], [63, 420, 448, 418, 470, 0],
  [64, 438, 473, 430, 478, 1], [65, 440, 452, 420, 456, 0], [66, 413, 442, 410, 445, 1], [67, 440, 462, 435, 465, 0],
  [69, 438, 453, 432, 462, 1], [70, 447, 455, 440, 460, 0], [71, 450, 460, 445, 468, 1], [72, 457, 473, 452, 487, 1],
  [73, 463, 475, 450, 486, 0], [74, 455, 468, 440, 472, 0], [75, 428, 461, 415, 461, 0], [76, 425, 430, 412, 436, 1],
  [78, 417, 422, 395, 430, 0], [79, 415, 427, 410, 440, 0], [81, 412, 444, 400, 455, 1], [82, 445, 477, 440, 498, 1],
  [83, 461, 477, 440, 500, 0], [84, 462, 467, 440, 470, 1], [85, 467, 490, 455, 523, 1], [86, 467, 491, 436, 505, 1],
  [87, 492, 497, 488, 512, 1], [88, 495, 508, 485, 515, 1], [89, 509, 514, 505, 524, 1], [90, 503, 514, 495, 514, 0],
  [91, 497, 505, 492, 508, 0], [93, 509, 518, 502, 520, 1], [94, 513, 530, 505, 570, 0], [95, 514, 562, 510, 565, 1],
  [96, 562, 596, 555, 600, 1], [97, 564, 596, 550, 614, 0], [98, 564, 571, 556, 573, 1]
];
candles.forEach(([k, top, bottom, high, low, filled]) => {
  const x = LEFT + 16 * k;
  path(`M${x}.5 ${high}V${low}`, '#0f0');
  out += `<rect x="${x - 5}.5" y="${top}.5" width="10" height="${bottom - top}" fill="${filled ? '#fff' : '#000'}" stroke="#0f0" shape-rendering="crispEdges"/>`;
});

// links between opening and closing deals
// color, x1, y1 from, y1 to, x2, y2 from, y2 to, count, solid
const R = '#f00', B = '#00f';
const fans = [
  [B, 359, 291, 318, 548, 410, 420, 11], [B, 455, 333, 340, 560, 412, 425, 4], [B, 471, 340, 352, 560, 412, 425, 5],
  [R, 359, 361, 364, 548, 408, 416, 3], [R, 343, 364, 364, 540, 414, 414, 1], [R, 359, 375, 376, 545, 418, 420, 1],
  [R, 423, 364, 375, 560, 410, 422, 6], [R, 487, 355, 362, 560, 412, 425, 5], [R, 503, 360, 366, 560, 415, 425, 5],
  [R, 440, 374, 380, 545, 412, 418, 3], [R, 540, 395, 412, 585, 415, 430, 8],
  [R, 551, 415, 428, 679, 500, 520, 7], [B, 570, 388, 400, 679, 500, 520, 5], [B, 585, 393, 400, 620, 440, 455, 5],
  [R, 600, 432, 440, 679, 490, 530, 5], [B, 613, 430, 460, 679, 495, 530, 6], [R, 631, 430, 450, 679, 490, 515, 7],
  [B, 631, 360, 385, 679, 490, 510, 8], [B, 648, 368, 405, 678, 470, 498, 22, 1], [R, 662, 415, 440, 679, 490, 520, 4, 1],
  [R, 630, 480, 485, 679, 555, 560, 2], [R, 695, 660, 680, 711, 680, 700, 4],
  [B, 763, 560, 580, 772, 560, 578, 4], [B, 778, 560, 575, 788, 560, 575, 6], [B, 794, 558, 561, 823, 557, 558, 3],
  [B, 798, 570, 571, 820, 592, 594, 2], [R, 836, 600, 615, 868, 560, 575, 6], [B, 855, 568, 590, 868, 560, 580, 6],
  [B, 887, 508, 514, 1079, 407, 412, 2], [B, 903, 520, 525, 1079, 408, 418, 3], [B, 890, 520, 530, 919, 550, 555, 4],
  [R, 903, 540, 558, 985, 545, 552, 6], [R, 919, 535, 555, 951, 530, 555, 5],
  [B, 938, 520, 548, 1077, 410, 430, 9], [R, 938, 540, 560, 1077, 408, 430, 6], [B, 951, 510, 545, 1077, 412, 440, 10],
  [R, 951, 548, 572, 1077, 412, 440, 10], [R, 983, 560, 592, 1077, 412, 450, 12], [B, 999, 500, 545, 1077, 415, 440, 10],
  [B, 1040, 465, 515, 1077, 412, 465, 22, 1], [R, 1010, 505, 535, 1077, 412, 440, 9], [R, 1030, 565, 575, 1077, 435, 450, 4, 1],
  [B, 1045, 510, 520, 1077, 435, 450, 6], [R, 996, 555, 556, 1150, 470, 471, 1], [R, 1030, 520, 521, 1175, 460, 461, 1],
  [R, 1044, 530, 531, 1204, 450, 451, 1], [R, 1034, 560, 561, 1225, 460, 461, 1], [B, 1063, 484, 492, 1110, 470, 478, 4],
  [B, 1084, 404, 425, 1332, 397, 398, 4], [B, 1145, 408, 435, 1332, 396, 399, 18], [B, 1084, 425, 447, 1160, 436, 445, 6],
  [B, 1160, 420, 440, 1230, 405, 425, 8], [R, 1145, 440, 462, 1332, 396, 400, 7], [R, 1110, 445, 460, 1200, 430, 445, 4],
  [R, 1191, 445, 462, 1257, 455, 472, 7], [R, 1239, 470, 472, 1332, 397, 400, 3], [R, 1204, 440, 460, 1300, 408, 425, 6],
  [B, 1270, 402, 430, 1325, 397, 415, 9], [B, 1300, 420, 440, 1352, 424, 438, 6], [R, 1239, 465, 475, 1275, 455, 468, 5],
  [R, 1351, 437, 441, 1431, 438, 444, 3], [R, 1399, 445, 462, 1447, 460, 472, 5], [R, 1399, 476, 490, 1447, 488, 505, 4],
  [R, 1447, 465, 476, 1543, 490, 505, 4], [R, 1479, 493, 505, 1527, 496, 508, 5], [R, 1495, 484, 508, 1594, 504, 512, 12],
  [R, 1591, 506, 520, 1607, 515, 540, 5], [R, 1611, 538, 560, 1657, 562, 572, 9]
];
fans.forEach(([color, x1, a1, b1, x2, a2, b2, n, solid]) => {
  let line = '';
  for (let i = 0; i < n; i++) {
    const t = n > 1 ? i / (n - 1) : 0;
    line += `M${x1} ${a1 + (b1 - a1) * t}L${x2} ${a2 + (b2 - a2) * t}`;
  }
  const width = n > 4 ? 2 : 1;
  path(line, color, solid ? '' : `stroke-width="${width}" stroke-dasharray="3 3"`);
});

// deal arrows stacked in columns: x, top, bottom, color, closing
const deals = [
  [549, 398, 432, B], [565, 377, 435, R], [570, 388, 434, B, 1], [581, 388, 410, R], [586, 393, 406, B, 1],
  [613, 427, 466, B], [629, 355, 385, R], [629, 413, 432, B], [629, 436, 450, B], [645, 363, 406, R], [650, 370, 410, B, 1],
  [677, 431, 560, B], [677, 573, 582, B], [677, 606, 637, B], [682, 625, 642, B, 1], [682, 510, 595, B, 1],
  [693, 571, 578, B], [693, 585, 707, B], [698, 687, 702, B, 1], [709, 583, 590, B], [709, 599, 635, B],
  [709, 637, 689, B], [709, 701, 709, B], [715, 638, 693, B, 1], [757, 555, 603, R], [762, 557, 595, B, 1],
  [773, 552, 584, R], [778, 557, 577, B, 1], [789, 555, 574, R], [794, 558, 573, B, 1], [826, 555, 563, B, 1],
  [821, 573, 601, B], [837, 586, 615, B], [842, 592, 614, B, 1], [853, 565, 596, R], [853, 601, 608, B],
  [869, 537, 598, R], [874, 541, 573, B, 1], [885, 506, 547, R], [890, 508, 543, B, 1], [901, 517, 530, R],
  [901, 538, 558, B], [917, 545, 562, R], [933, 516, 561, R], [938, 550, 563, B, 1], [949, 502, 550, R],
  [954, 504, 545, R, 1], [949, 550, 577, B], [965, 542, 562, R], [965, 560, 582, B], [981, 558, 596, B],
  [997, 515, 557, R], [1029, 510, 534, R], [1029, 548, 574, B], [1034, 522, 560, B, 1], [1045, 505, 527, R],
  [1045, 483, 500, B], [1061, 487, 511, R], [1077, 400, 473, R], [1082, 396, 433, B, 1], [1093, 419, 437, R],
  [1098, 420, 436, B, 1], [1093, 441, 452, R], [1109, 433, 443, R], [1109, 442, 479, B], [1114, 455, 478, B, 1],
  [1125, 408, 441, R], [1141, 412, 432, B], [1157, 443, 465, B], [1173, 426, 442, R], [1189, 447, 461, B],
  [1205, 440, 462, R], [1237, 458, 487, B], [1258, 445, 472, B, 1], [1274, 453, 476, B, 1], [1285, 415, 444, R],
  [1301, 413, 435, B], [1317, 419, 438, R], [1333, 391, 417, R], [1338, 388, 405, B, 1], [1349, 433, 468, B],
  [1354, 413, 445, B, 1], [1365, 401, 432, R], [1370, 410, 420, B, 1], [1381, 399, 433, R], [1381, 438, 453, B],
  [1397, 441, 498, B], [1413, 414, 441, R], [1413, 471, 497, B], [1418, 442, 463, B, 1], [1429, 433, 441, R],
  [1434, 434, 468, B, 1], [1445, 460, 487, B], [1445, 490, 516, B], [1450, 453, 515, B, 1], [1477, 489, 513, B],
  [1493, 483, 519, B], [1509, 508, 526, B], [1544, 493, 507, B, 1], [1557, 496, 518, B], [1562, 493, 514, B, 1],
  [1573, 507, 522, B], [1578, 502, 515, B, 1], [1589, 513, 552, B], [1589, 555, 570, B], [1594, 502, 513, B, 1],
  [1605, 532, 562, B], [1610, 510, 540, B, 1], [1621, 560, 604, B], [1637, 572, 611, B], [1642, 552, 572, B, 1],
  [1657, 556, 573, B, 1]
];
deals.forEach(([x, top, bottom, color, closing]) => {
  const mix = color === R ? 'url(#mix-red)' : 'url(#mix-blue)';
  let marks = '';
  if (closing) {
    out += `<path d="M${x - 3} ${top + 5}L${x + 2} ${top - 1}h1V${bottom + 1}h-1L${x - 3} ${bottom - 5}z" fill="#fff" shape-rendering="crispEdges"/>`;
    rect(x - 2, top + 3, 4, Math.max(bottom - top - 6, 2), mix);
    for (let y = top + 5; y < bottom - 2; y += 11) marks += `M${x - 3} ${y}l4-4v8z`;
  } else {
    out += `<path d="M${x - 4} ${top + 1}L${x} ${top - 1}l4 5V${bottom - 4}L${x} ${bottom + 1}l-4-2z" fill="#fff" shape-rendering="crispEdges"/>`;
    rect(x - 2, top + 2, 5, Math.max(bottom - top - 4, 2), mix);
    for (let y = top + 4; y < bottom - 2; y += 10) marks += `M${x - 3} ${y - 1}h3v-3l4 4-4 4v-3h-3z`;
  }
  out += `<path d="${marks}" fill="${color}" shape-rendering="crispEdges"/>`;
});
path('M679.5 440V520M695.5 590V700M711.5 585V708', R, 'stroke-dasharray="7 3"');
out += '</g>';

// horizontal and vertical marker lines
path(`M${LEFT} 555.5H${RIGHT}M359.5 ${TOP}V${BOTTOM}`, R);
path(`M${LEFT} 614.5H${RIGHT}`, R);
[191, 718].forEach(y => {
  out += `<rect x="357.5" y="${y - 1}.5" width="4" height="4" fill="#fff" stroke="#f00"/>`;
});
out += '<path d="M1677 189h15l-7 8z" fill="#778899"/>';

// frame, axes and captions
path(`M${LEFT}.5 ${BOTTOM}.5V188.5H${RIGHT}.5V${BOTTOM}.5z`, '#fff');
const dates = ['28 Oct 2021', '28 Oct 09:00', '28 Oct 17:00', '29 Oct 02:00', '29 Oct 10:00', '29 Oct 18:00', '1 Nov 03:00',
  '1 Nov 11:00', '1 Nov 19:00', '2 Nov 04:00', '2 Nov 12:00', '2 Nov 20:00', '3 Nov 05:00'];
dates.forEach((s, i) => {
  path(`M${LEFT + 128 * i}.5 ${BOTTOM}v4`, '#fff');
  text(86 + 128 * i, 739, s);
});
rect(297, 725, 123, 17, R);
text(302, 739, '2021.10.28 18:00', 'on-color');

['1809.05', '1804.00', '1798.90', '1793.85', '1788.80', '', '1778.65', '1773.60'].forEach((s, i) => {
  path(`M${RIGHT} ${231 + 65 * i}.5h3`, '#fff');
  text(2093, 237 + 65 * i, s);
});
rect(2088, 566, 62, 14, '#fff');
rect(2088, 549, 62, 17, R);
rect(2088, 608, 62, 17, R);
text(2093, 563, '1783.83', 'on-color');
text(2093, 578, '1782.55', 'on-color');
text(2093, 622, '1779.21', 'on-color');

out += '<path d="M90 196h12l-6 6z" fill="#fff"/>';
text(108, 205, 'XAUUSD#,H1&#160; 1783.12 1783.28 1782.55 1782.55');
out += '<text x="2059" y="206" text-anchor="end">MMaker-M1TrendTrade20211008</text>';
out += '<circle cx="2072" cy="203" r="8" fill="none" stroke="#fff"/><path d="M2070 198v4M2075 198v4M2067 204q5 7 10 0" fill="none" stroke="#fff" stroke-width="1.5"/>';
svg.innerHTML = out;

// account history: order, open time, open price, close time, close price, swap, profit
const orders = [
  ['54947239', '17:49:53', '1799.02', '28 17:54:02', '1798.99', '0.00', '0.03'],
  ['54947244', '17:50:00', '1799.23', '28 17:54:09', '1798.88', '0.00', '0.35'],
  ['54947292', '17:51:01', '1799.32', '28 17:54:02', '1798.98', '0.00', '0.34'],
  ['54947322', '17:52:01', '1799.76', '28 17:55:01', '1798.09', '0.00', '1.67'],
  ['54947334', '17:53:00', '1798.97', '28 17:54:02', '1798.98', '0.00', '-0.01'],
  ['54947369', '17:54:01', '1798.79', '28 17:54:09', '1798.88', '0.00', '-0.09'],
  ['54947398', '17:55:00', '1797.76', '28 18:00:02', '1798.58', '0.00', '-0.82'],
  ['54947423', '17:56:00', '1798.72', '28 18:00:23', '1798.38', '0.00', '0.34'],
  ['54947461', '17:57:00', '1799.46', '28 18:00:02', '1798.59', '0.00', '0.87'],
  ['54947483', '17:58:00', '1798.79', '29 07:44:57', '1794.42', '-0.02', '4.37'],
  ['54947500', '17:59:01', '1799.00', '28 18:00:02', '1798.60', '0.00', '0.40'],
  ['54947535', '18:00:00', '1798.68', '28 18:00:23', '1798.38', '0.00', '0.30'],
  ['54947593', '18:01:00', '1797.91', '29 07:46:33', '1794.23', '-0.02', '3.68'],
  ['54947612', '18:02:01', '1798.84', '29 07:44:57', '1794.42', '-0.02', '4.42'],
  ['54947643', '18:03:01', '1798.99', '29 07:47:24', '1794.20', '-0.02', '4.79'],
  ['54947671', '18:04:02', '1798.54', '29 07:44:58', '1794.42', '-0.02', '4.12']
];
const icon = '<svg class="row-icon"><use href="#doc"/></svg>';
document.getElementById('orders').insertAdjacentHTML('beforeend', orders.map(o => {
  const cells = [icon + o[0], '2021.10.28 ' + o[1], 'sell', '0.01', 'xauusd#', o[2], '0.00', '0.00', '2021.10.' + o[3], o[4],
    '0.00', '0.00', o[5], o[6], '3f'];
  return '<tr><td>' + cells.join('</td><td>') + '</td></tr>';
}).join(''));
```
